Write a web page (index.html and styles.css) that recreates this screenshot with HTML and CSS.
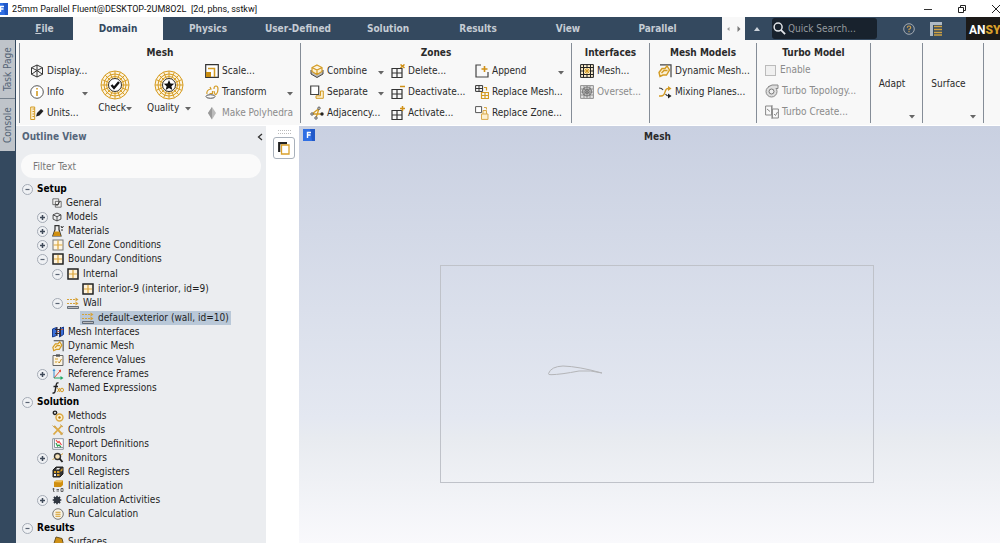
FILE: index.html
```html
<!DOCTYPE html>
<html lang="en">
<head>
<meta charset="utf-8">
<title>25mm Parallel Fluent</title>
<link rel="stylesheet" href="styles.css">
</head>
<body>
<svg class="defs" aria-hidden="true">
  <symbol id="app" viewBox="0 0 12 12"><rect width="12" height="12" fill="#2f6fe4"/><path d="M7 0h5v12H9z" fill="#2159c9"/><path d="M4.500 9V3.500h3.500M4.500 6h3" stroke="#fff" stroke-width="1.400" fill="none"/></symbol>
  <symbol id="plus" viewBox="0 0 11 11"><circle cx="5.500" cy="5.500" r="5" fill="#eff1f4" stroke="#a3aab4"/><path d="M3 5.500h5M5.500 3v5" stroke="#3f4a59" stroke-width="1.500"/></symbol>
  <symbol id="minus" viewBox="0 0 11 11"><circle cx="5.500" cy="5.500" r="5" fill="#eff1f4" stroke="#a3aab4"/><path d="M3.500 5.500h4" stroke="#596373" stroke-width="1.200"/></symbol>
  <symbol id="cube" viewBox="0 0 14 14"><path d="M7 1l5.500 2.700v6.600L7 13l-5.500-2.700V3.700zM1.500 3.700L7 6.500l5.500-2.800M7 6.500V13M7 1v5.500M1.500 10.300L7 6.500l5.500 3.800" fill="none" stroke="#333"/></symbol>
  <symbol id="zone" viewBox="0 0 12 12"><rect x="1" y="1" width="10" height="10" fill="#fff6e4" stroke="#777"/><path d="M1.500 6h9M6 1.500v9" stroke="#dba53a" stroke-width="1.200"/></symbol>
  <symbol id="bound" viewBox="0 0 12 12"><rect x="1" y="1" width="10" height="10" fill="#fff3db" stroke="#222" stroke-width="1.500"/><path d="M2 6h8M6 2v8" stroke="#dba53a" stroke-width="1.200"/></symbol>
  <symbol id="wall" viewBox="0 0 12 12"><path d="M0 2.500h9M0 6.500h9" stroke="#d6a238" stroke-dasharray="2 1"/><path d="M8.500 .5l3 2-3 2zM8.500 4.500l3 2-3 2z" fill="#d6a238"/><path d="M.5 9.500h11v2H.5z" fill="#bbb" stroke="#4b5562" stroke-width=".8"/></symbol>
  <symbol id="dyn" viewBox="0 0 14 14"><path d="M2 .8h11v12.400" fill="none" stroke="#444" stroke-width="1.200"/><path d="M1 8.500l3-4h3l2-2.500 2.500 4-3 5H5l-3 1.500zM3.500 9l2.500-2.500h3.500" fill="#fbf0d5" stroke="#d39b24" stroke-width="1.400"/></symbol>
  <symbol id="grid" viewBox="0 0 14 14"><path d="M1 4.500h10v9H1zM1 9h10M6 4.500v9" fill="none" stroke="#333" stroke-width="1.200"/></symbol>
  <symbol id="disc" viewBox="0 0 30 30"><circle cx="15" cy="15" r="14" fill="#fdf4df"/><g fill="none" stroke="#d69d24"><circle cx="15" cy="15" r="14"/><circle cx="15" cy="15" r="11"/><circle cx="15" cy="15" r="8.500"/><path d="M15 1v28M1 15h28M5.100 5.100l19.800 19.800M24.900 5.100L5.100 24.900M9.600 2.100l10.800 25.800M20.400 2.100L9.600 27.900M2.100 9.600l25.800 10.800M2.100 20.400L27.900 9.600"/></g><circle cx="15" cy="15" r="6.500" fill="#fff" stroke="#333"/></symbol>
  <symbol id="down" viewBox="0 0 6 4"><path d="M0 0h6L3 3.500z" fill="#666"/></symbol>
</svg>

<div class="app">
  <header class="titlebar">
    <svg class="logo"><use href="#app"/></svg>
    <h1>25mm Parallel Fluent@DESKTOP-2UM8O2L&nbsp; [2d, pbns, sstkw]</h1>
    <div class="wincontrols">
      <button aria-label="Minimize"><svg viewBox="0 0 10 10"><path d="M1 5.500h8" stroke="#333"/></svg></button>
      <button aria-label="Restore"><svg viewBox="0 0 10 10"><path d="M1.500 3.500h5v5h-5zM3.500 3.500v-2h5v5h-2" fill="none" stroke="#222"/></svg></button>
      <button aria-label="Close"><svg viewBox="0 0 10 10"><path d="M1 1l8 8M9 1L1 9" stroke="#222"/></svg></button>
    </div>
  </header>

  <nav class="tabs">
    <button class="tab file"><u>F</u>ile</button>
    <button class="tab active">Domain</button>
    <button class="tab">Physics</button>
    <button class="tab">User-Defined</button>
    <button class="tab">Solution</button>
    <button class="tab">Results</button>
    <button class="tab">View</button>
    <button class="tab last">Parallel</button>
    <div class="scroller">
      <button aria-label="Scroll left"><svg viewBox="0 0 4 6"><path d="M3.500 1v4L1 3z" fill="#999"/></svg></button>
      <button aria-label="Scroll right"><svg viewBox="0 0 4 6"><path d="M.5 0v6L3.500 3z" fill="#777"/></svg></button>
    </div>
    <button class="collapse" aria-label="Collapse ribbon"><svg viewBox="0 0 6 4"><path d="M0 4h6L3 0z" fill="#ccd3db"/></svg></button>
    <label class="search">
      <svg viewBox="0 0 14 14"><circle cx="5.500" cy="5.500" r="4.300" fill="none" stroke="#e2e5e9" stroke-width="1.600"/><path d="M8.500 8.500l4.500 4.500" stroke="#e2e5e9" stroke-width="2"/></svg>
      <input type="text" placeholder="Quick Search..." aria-label="Quick Search">
    </label>
    <div class="navicons">
      <button aria-label="Help"><svg class="help" viewBox="0 0 12 12"><circle cx="6" cy="6" r="5.300" fill="none" stroke="#a5acb4"/><path d="M4.300 4.700q0-1.700 1.700-1.700t1.700 1.500T6 6.300v1M6 8v1.200" fill="none" stroke="#d0a04a" stroke-width="1.100"/></svg></button>
      <button aria-label="Layout"><svg class="lay" viewBox="0 0 12 14"><path d="M0 0h12v3H0zM0 3h3v11H0z" fill="#aeb9c4"/><path d="M4 4.500h8M4 7.500h8M4 10.500h8M4 13h8" stroke="#d0a241" stroke-width="1.500"/></svg></button>
    </div>
    <div class="brand">AN<b>SY</b></div>
  </nav>

  <div class="body">
    <aside class="rail">
      <button>Task Page</button>
      <button class="console">Console</button>
    </aside>

    <div class="content">
      <div class="ribbon">
        <section class="group">
          <h2>Mesh</h2>
          <div class="cols mesh">
            <div class="stack">
              <button><svg><use href="#cube"/></svg>Display...</button>
              <button><svg viewBox="0 0 14 14"><circle cx="7" cy="7" r="6.300" fill="#fff" stroke="#555"/><path d="M7 6v5M7 3v1.600" stroke="#d39b24" stroke-width="1.600"/></svg>Info<svg class="dd"><use href="#down"/></svg></button>
              <button><svg viewBox="0 0 14 14"><path d="M.7 1h4v12.500h-4zM2.500 3h2M2.500 5.500h2M2.500 8h2M2.500 10.500h2" fill="#fdf0d0" stroke="#d39b24"/><path d="M6 10.500l1-3.500 4-4 2.500 2-4 4.500z" fill="#222"/></svg>Units...</button>
            </div>
            <button class="big"><svg viewBox="0 0 30 30"><use href="#disc"/><path d="M11.500 15l2.500 3 5-6" fill="none" stroke="#111" stroke-width="2.400"/></svg><span>Check<svg class="dd"><use href="#down"/></svg></span></button>
            <button class="big"><svg viewBox="0 0 30 30"><use href="#disc"/><path d="M15 10l1.500 3.500 3.700.3-2.800 2.400.9 3.800-3.300-2-3.300 2 .9-3.800-2.800-2.400 3.700-.3z" fill="#111"/></svg><span>Quality&nbsp; <svg class="dd"><use href="#down"/></svg></span></button>
            <div class="stack">
              <button><svg viewBox="0 0 14 14"><path d="M.7 .7h12.600v12.600H.7z" fill="#fff" stroke="#333" stroke-width="1.200"/><path d="M1 8h5v5H1z" fill="#c98d10"/><path d="M3 4.500h6.500V13" fill="none" stroke="#d39b24" stroke-width="1.500"/></svg>Scale...</button>
              <button><svg viewBox="0 0 14 14"><ellipse cx="5.500" cy="11.500" rx="4.500" ry="1.800" fill="none" stroke="#555"/><path d="M2 9q-1-4 4-5L5 2M4.500 8.500h3V6M9 4q0-3 2-3t2 3-1.500 5-2.500-3" fill="none" stroke="#d39b24" stroke-width="1.200"/></svg>Transform<svg class="dd"><use href="#down"/></svg></button>
              <button disabled><svg viewBox="0 0 14 14"><path d="M7 1l4 6-4 6.500L3 7z" fill="#bbb"/><path d="M7 1v12.500L3 7z" fill="#999"/></svg>Make Polyhedra</button>
            </div>
          </div>
        </section>

        <section class="group">
          <h2>Zones</h2>
          <div class="cols zones">
            <div class="stack">
              <button><svg viewBox="0 0 14 14"><path d="M1 6v4l6 3.500L13 10V6" fill="#bbb" stroke="#444"/><path d="M7 1l5 2.500v4L7 10.500l-5-3v-4zM2 3.500L7 6l5-2.500M7 6v4" fill="#fdf0d0" stroke="#d39b24" stroke-width="1.200"/></svg>Combine<svg class="dd"><use href="#down"/></svg></button>
              <button><svg viewBox="0 0 14 14"><path d="M.7 1h8v8.500h-8z" fill="#fff" stroke="#444" stroke-width="1.200"/><path d="M10.500 6h2.800v7.300H6v-2.500h4.500z" fill="#fdf0d0" stroke="#d39b24"/></svg>Separate<svg class="dd"><use href="#down"/></svg></button>
              <button><svg viewBox="0 0 14 14"><path d="M2 8l7-5.500M2 8h10M9 2.500L6 12" fill="none" stroke="#d39b24" stroke-width="1.300"/><g fill="#fff" stroke="#555"><circle cx="2" cy="8" r="1.200"/><circle cx="9" cy="2.200" r="1.200"/><circle cx="6" cy="12" r="1.200"/></g><circle cx="12" cy="8" r="1.700" fill="#222"/></svg>Adjacency...</button>
            </div>
            <div class="stack">
              <button><svg viewBox="0 0 14 14"><use href="#grid"/><path d="M9.500 .5l4 3.500m0-3.500L9.500 4" stroke="#d09016" stroke-width="1.500"/></svg>Delete...</button>
              <button><svg viewBox="0 0 14 14"><use href="#grid"/><path d="M9 1.500h5" stroke="#d09016" stroke-width="1.500"/></svg>Deactivate...</button>
              <button><svg viewBox="0 0 14 14"><use href="#grid"/><path d="M9 2.500h5M11.500 0v5" stroke="#d09016" stroke-width="1.500"/></svg>Activate...</button>
            </div>
            <div class="stack">
              <button><svg viewBox="0 0 14 14"><path d="M6 1H1v12h12V8" fill="none" stroke="#444" stroke-width="1.200"/><path d="M6.500 5h6M9.500 2v6" stroke="#d09016" stroke-width="1.600"/></svg>Append<svg class="dd"><use href="#down"/></svg></button>
              <button><svg viewBox="0 0 14 14"><path d="M.6 .6h7v5.800h-7zM.6 3.500h7M4 .6v6" fill="none" stroke="#333"/><path d="M6.500 7.500h7v6h-7zM6.500 10.500h7M10 7.500v6M9 2.500h2.500v3" fill="none" stroke="#d39b24" stroke-width="1.200"/></svg>Replace Mesh...</button>
              <button><svg viewBox="0 0 14 14"><path d="M.6 .6h6v6h-6z" fill="#fff" stroke="#555"/><path d="M6.500 8h6.500v5.400H6.500zM8 8V4.500h3.500V8M9 1.500h2.500v2" fill="#fdf0d0" stroke="#d9a94a"/></svg>Replace Zone...</button>
            </div>
          </div>
        </section>

        <section class="group">
          <h2>Interfaces</h2>
          <div class="stack inset">
            <button><svg viewBox="0 0 14 14"><path d="M.5 .5h13v13H.5z" fill="#fdf0d0"/><path d="M4.500 4.500l5 5M9.500 4.500l-5 5M4 7h6M7 4v6" stroke="#d39b24"/><path d="M.6 .6h12.800v12.800H.6zM3.500 .5v13M10.500 .5v13M.5 3.500h13M.5 10.500h13M.5 7h3M10.500 7h3M7 .5v3M7 10.500v3" fill="none" stroke="#222"/></svg>Mesh...</button>
            <button disabled><svg viewBox="0 0 14 14"><path d="M.6 .6h12.800v12.800H.6zM4 1v12M10 1v12M1 4h12M1 10h12M1 7h12M7 1v12" fill="#e4e4e4" stroke="#909090"/><g fill="none" stroke="#707070"><circle cx="7" cy="6.500" r="4.500"/><circle cx="7" cy="6.500" r="2"/><path d="M4 3.500l6 6M10 3.500l-6 6"/></g></svg>Overset...</button>
          </div>
        </section>

        <section class="group">
          <h2>Mesh Models</h2>
          <div class="stack inset">
            <button><svg><use href="#dyn"/></svg>Dynamic Mesh...</button>
            <button><svg viewBox="0 0 14 14"><path d="M1 11h2q3 0 4-4t4-3.500" fill="none" stroke="#d39b24" stroke-width="1.300"/><path d="M1 3q3 0 4 2M7.500 9q1 2 3.500 2" fill="none" stroke="#444" stroke-width="1.200"/><path d="M10 1l3.500 2.500L10 6z" fill="#d39b24"/><path d="M10 8.500l3.500 2.500-3.500 2.500z" fill="#222"/></svg>Mixing Planes...</button>
          </div>
        </section>

        <section class="group">
          <h2>Turbo Model</h2>
          <div class="stack turbo">
            <label><input type="checkbox" disabled>Enable</label>
            <button disabled><svg viewBox="0 0 14 14"><circle cx="6.500" cy="7.500" r="5.500" fill="#ddd" stroke="#888"/><circle cx="6.500" cy="7.500" r="2.500" fill="#eee" stroke="#777"/><path d="M3 3l4-2h6v3.500h-2" fill="#ddd" stroke="#888"/></svg>Turbo Topology...</button>
            <button disabled><svg viewBox="0 0 14 14"><path d="M.6 1h6v9h-6zM7.400 4h6v9h-6zM7 0v14M2 4l3 2.500M9 9l1.500 1.500L12.500 7" fill="none" stroke="#888"/></svg>Turbo Create...</button>
          </div>
        </section>

        <section class="group solo"><button>Adapt</button><svg class="dd"><use href="#down"/></svg></section>
        <section class="group solo"><button>Surface</button><svg class="dd"><use href="#down"/></svg></section>
        <div class="group"></div>
      </div>

      <div class="work">
        <section class="outline">
          <div class="outlinehead"><h2>Outline View</h2><button aria-label="Hide panel"><svg viewBox="0 0 6 8"><path d="M5 1L1.500 4 5 7" fill="none" stroke="#333" stroke-width="1.300"/></svg></button></div>
          <input class="filter" type="text" placeholder="Filter Text" aria-label="Filter Text">
          <ul class="tree">
            <li><div class="row top"><svg class="tg"><use href="#minus"/></svg>Setup</div>
              <ul>
                <li><div class="row leaf"><svg class="sm" viewBox="0 0 12 12"><path d="M1 1h7v7H1zM4 4h7v7H4z" fill="#f5f5f5" stroke="#555"/><path d="M4.500 7l1.500 2 3.500-5" fill="none" stroke="#333" stroke-width="1.200"/></svg>General</div></li>
                <li><div class="row"><svg class="tg"><use href="#plus"/></svg><svg class="sm" viewBox="0 0 14 14"><path d="M7 1.500l5.500 2.500v6L7 12.500 1.500 10V4zM1.500 4L7 6.500 12.500 4M7 6.500v6" fill="none" stroke="#333" stroke-width="1.200"/></svg>Models</div></li>
                <li><div class="row"><svg class="tg"><use href="#plus"/></svg><svg viewBox="0 0 12 12"><path d="M3 .7h4v4l2 6.300H.8L3 4.700z" fill="#eee" stroke="#333" stroke-width="1.200"/><path d="M2.400 6.500h5l1.400 4.500H1z" fill="#d08f10"/><path d="M9 1l1 2 1.500-2M9 5h2" stroke="#333" fill="none"/></svg>Materials</div></li>
                <li><div class="row"><svg class="tg"><use href="#plus"/></svg><svg><use href="#zone"/></svg>Cell Zone Conditions</div></li>
                <li><div class="row"><svg class="tg"><use href="#minus"/></svg><svg><use href="#bound"/></svg>Boundary Conditions</div>
                  <ul>
                    <li><div class="row"><svg class="tg"><use href="#minus"/></svg><svg><use href="#bound"/></svg>Internal</div>
                      <ul><li><div class="row leaf"><svg><use href="#bound"/></svg>interior-9 (interior, id=9)</div></li></ul></li>
                    <li><div class="row"><svg class="tg"><use href="#minus"/></svg><svg><use href="#wall"/></svg>Wall</div>
                      <ul><li><div class="row leaf"><span class="selected"><svg><use href="#wall"/></svg>default-exterior (wall, id=10)</span></div></li></ul></li>
                  </ul></li>
                <li><div class="row leaf"><svg viewBox="0 0 12 12"><path d="M.5 3l4-1.500v8L.5 11zM7.500 3l4-2v7.500l-4 2.500z" fill="#3a6fd8" stroke="#173a8c"/><path d="M3 3.500h6M3 7.500h6M5 1v9M8.500 1v9" stroke="#332a35"/><path d="M5.500 5.500h2M9 3.500h2" stroke="#c0604c"/></svg>Mesh Interfaces</div></li>
                <li><div class="row leaf"><svg><use href="#dyn"/></svg>Dynamic Mesh</div></li>
                <li><div class="row leaf"><svg viewBox="0 0 12 12"><path d="M1 1.500h10v10H1z" fill="#fbf4e4" stroke="#666"/><path d="M4 .3h4v2.400H4z" fill="#555"/><path d="M3 5h3M3 8h2" stroke="#d39b24" stroke-width="1.200"/><path d="M6 7.500l1.300 1.500L9.500 5" fill="none" stroke="#c08c20"/></svg>Reference Values</div></li>
                <li><div class="row"><svg class="tg"><use href="#plus"/></svg><svg viewBox="0 0 12 12"><path d="M2 10V2" stroke="#3b8ccc"/><path d="M.5 3L2 .5 3.500 3z" fill="#3b8ccc"/><path d="M2 10l6-7" stroke="#e04b35"/><path d="M6.500 2.500L9 1.500v3z" fill="#e04b35"/><path d="M2 10h8" stroke="#21a866"/><path d="M8.500 8l3 2-3 2z" fill="#21a866"/></svg>Reference Frames</div></li>
                <li><div class="row leaf"><svg viewBox="0 0 12 12"><path d="M6.500 1.200Q4.700 0 4.200 3L3 9.500q-.5 2-2.500 1.300M1.500 4.500H6" fill="none" stroke="#222" stroke-width="1.400"/><path d="M5.500 6l2.500 4M8 6l-2.500 4" stroke="#d39b24"/><ellipse cx="10" cy="8" rx="1.500" ry="1.800" fill="none" stroke="#d39b24"/></svg>Named Expressions</div></li>
              </ul></li>
            <li><div class="row top"><svg class="tg"><use href="#minus"/></svg>Solution</div>
              <ul>
                <li><div class="row leaf"><svg viewBox="0 0 12 12"><circle cx="3" cy="2.800" r="1.700" fill="none" stroke="#222" stroke-width="1.400"/><circle cx="7.500" cy="7.500" r="3.500" fill="#fdf0d0" stroke="#dba944" stroke-width="1.400"/><circle cx="7.500" cy="7.500" r="1.200" fill="#b97c0a"/></svg>Methods</div></li>
                <li><div class="row leaf"><svg viewBox="0 0 12 12"><path d="M2 2l8.500 8.500M10 1.500L1.500 10.500" stroke="#dba944" stroke-width="1.800"/><path d="M.5 1.500l2 2 1.500-1.500M8 .5l3 2.500M8.500 11l2.500-2.500" fill="none" stroke="#c7a665"/></svg>Controls</div></li>
                <li><div class="row leaf"><svg viewBox="0 0 12 12"><path d="M.7 .7h10.600v10.600H.7z" fill="#fff" stroke="#8b939e"/><path d="M2.500 1v8.500H11" fill="none" stroke="#8b939e"/><path d="M4 2l2 2.500 1-1L9.500 7" fill="none" stroke="#e44" stroke-width="1.200"/><path d="M4 5l1.500 3 1.500-1 2 2" fill="none" stroke="#2a9d4e" stroke-width="1.200"/></svg>Report Definitions</div></li>
                <li><div class="row"><svg class="tg"><use href="#plus"/></svg><svg viewBox="0 0 12 12"><circle cx="5.500" cy="4.500" r="3" fill="#f7e3ba" stroke="#333" stroke-width="1.400"/><path d="M7.500 6.500l3 3.500" stroke="#222" stroke-width="1.900"/><path d="M.5 8l2-2M9 3l2-1.500" stroke="#dba944"/></svg>Monitors</div></li>
                <li><div class="row leaf"><svg viewBox="0 0 12 12"><path d="M1 4l3-3h7v7l-3 3H1z" fill="#333" stroke="#222"/><path d="M2 5h2v2H2zM5 5h2.500v2H5zM5 8h2.500v2H5zM8.500 4l2-2v2.500l-2 1.500z" fill="#d9a02b"/><path d="M2 8h2v2H2zM5 2h3L7 3.500H4z" fill="#eee"/></svg>Cell Registers</div></li>
                <li><div class="row leaf"><svg viewBox="0 0 12 12"><path d="M2 2l2-1.500h7v4.500L9 7H2z" fill="#d08f10"/><path d="M2 2l2-1.500h7L9 2.500z" fill="#eebd57"/><path d="M1.500 8v3.500h1M.5 9h2M4.500 9.500h2.500M4.500 11h2.500M9 8.500h2v3H9z" fill="none" stroke="#555" stroke-width=".9"/></svg>Initialization</div></li>
                <li><div class="row"><svg class="tg"><use href="#plus"/></svg><svg class="sm" viewBox="0 0 12 12"><circle cx="6" cy="6" r="4" fill="#2f3640"/><path d="M6 .8v10.400M.8 6h10.400M2.300 2.300l7.400 7.400M9.700 2.300L2.300 9.700" stroke="#2f3640" stroke-width="2"/></svg>Calculation Activities</div></li>
                <li><div class="row leaf"><svg viewBox="0 0 12 12"><circle cx="6" cy="6" r="5.300" fill="#f7f2e6" stroke="#777"/><path d="M3.500 4.200h5M3.500 6.200h5M3.500 8.200h5" stroke="#d39b24" stroke-width="1.100"/></svg>Run Calculation</div></li>
              </ul></li>
            <li><div class="row top"><svg class="tg"><use href="#minus"/></svg>Results</div>
              <ul><li><div class="row leaf"><svg viewBox="0 0 12 12"><path d="M4 1l6 1.500 1 4-4 5-6-1z" fill="#cf9117" stroke="#6b5220"/></svg>Surfaces</div></li></ul></li>
          </ul>
        </section>

        <div class="toolstrip">
          <div class="grip"></div>
          <button aria-label="Copy view"><svg viewBox="0 0 12 13"><path d="M1.200 10V1.200H9" fill="none" stroke="#222" stroke-width="2.200"/><path d="M3.500 3h7.500v9H3.500z" fill="#fff" stroke="#d9a02b" stroke-width="1.300"/></svg></button>
        </div>

        <main class="viewport">
          <div class="viewhead"><svg class="logo"><use href="#app"/></svg><h2>Mesh</h2></div>
          <svg class="scene" viewBox="0 0 701 399" preserveAspectRatio="none">
            <rect x="141.500" y="121.500" width="433" height="217" fill="none" stroke="#bfc2c9"/>
            <path d="M249.500 229.500Q252 222.500 264 222Q280 222.500 303 229Q292 226 280 227Q262 230.500 252 230.700Q249 230.700 249.500 229.500z" fill="none" stroke="#b4b5b8"/>
          </svg>
        </main>
      </div>
    </div>
  </div>
</div>
</body>
</html>
```
FILE: styles.css
```css
* { box-sizing: border-box; }
body { margin: 0; font-family: "DejaVu Sans Condensed", "Noto Sans", sans-serif; font-size: 10px; line-height: 14px; color: #2a2a2a; background: #fff; }
h1, h2, ul { margin: 0; padding: 0; }
ul { list-style: none; }
button { margin: 0; padding: 0; border: 0; background: none; font: inherit; color: inherit; }
input { font: inherit; }
.defs { display: none; }
svg { flex: none; }
.logo { width: 12px; height: 12px; }
.app { display: flex; flex-direction: column; height: 100vh; overflow: hidden; }

.titlebar { display: flex; align-items: center; flex: none; height: 17px; }
.titlebar .logo { margin-left: -4px; }
.titlebar h1 { flex: 1; margin-left: 4px; font: 9px/14px Roboto, sans-serif; color: #111; white-space: nowrap; }
.wincontrols { display: flex; gap: 24px; margin-right: -1px; }
.wincontrols button { width: 10px; height: 10px; }
.wincontrols svg { display: block; width: 10px; height: 10px; }

.tabs { display: flex; flex: none; height: 23px; background: #34495f; }
.tab { flex: 0 1 90px; font-weight: bold; font-size: 10px; color: #c5ccd4; }
.tab.file { flex-basis: 73px; padding-left: 16px; }
.tab.active { background: #f8f8f8; color: #34495f; }
.tab.last { flex-basis: 109px; padding: 0 20px 0 0; }
.scroller { display: flex; align-items: center; justify-content: center; gap: 7px; width: 23px; background: #f8f8f8; }
.scroller button { line-height: 0; }
.scroller svg { width: 4px; height: 6px; }
.collapse { width: 23px; line-height: 0; }
.collapse svg { width: 6px; height: 4px; }
.search { display: flex; flex: 0 1 105px; align-items: center; gap: 2px; min-width: 0; margin: 1px 0 1px 4px; padding-left: 1px; border-radius: 3px; background: #18222d; }
.search svg { width: 13px; height: 13px; }
.search input { flex: 1; min-width: 0; padding: 0; border: 0; outline: 0; background: none; color: #a0a5aa; }
.search input::placeholder { color: #969b9f; opacity: 1; }
.navicons { display: flex; flex: 1; align-items: center; justify-content: flex-end; gap: 15px; padding-right: 24px; }
.navicons button { line-height: 0; }
.help { width: 12px; height: 12px; }
.lay { width: 12px; height: 14px; }
.brand { width: 34px; padding: 4px 0 0 3px; overflow: hidden; background: #1c1a18; color: #fff; font: bold 12px/18px Roboto, sans-serif; }
.brand b { color: #d9a02b; }

.body { display: flex; flex: 1; min-height: 0; }
.rail { flex: none; width: 16px; background: #34495f; }
.rail button { display: block; width: 15px; height: 59px; background: #bfc4ca; border-top: 1px solid #75808c; color: #566577; writing-mode: vertical-rl; transform: rotate(180deg); text-align: center; }
.rail .console { height: 52px; border-top: 0; }
.content { display: flex; flex: 1; flex-direction: column; min-width: 0; }

.ribbon { display: grid; flex: none; grid-template-columns: 281fr 271fr 78fr 107fr 114fr 52fr 61fr 17fr; height: 86px; padding: 3px 0 5px 3px; background: #f8f8f8; border-bottom: 1px solid #fff; }
.group { min-width: 0; border-left: 1px solid #858d97; white-space: nowrap; }
.group h2 { padding-top: 2px; font-size: 10px; line-height: 15px; text-align: center; }
.stack { display: flex; flex-direction: column; }
.stack button, .stack label { display: flex; align-items: center; gap: 3px; height: 21px; text-align: left; }
.stack button > svg:first-child { width: 14px; height: 14px; }
.stack button:disabled, .stack label { color: #8b8b8b; }
.stack .dd { margin: 5px 7px 0 auto; }
svg.dd { width: 6px; height: 4px; }
.cols { display: grid; }
.cols.mesh { grid-template-columns: 58px 54px 54px 1fr; padding-left: 10px; }
.cols.mesh .stack:first-child .dd { margin-right: 0; }
.cols.mesh .stack:last-child { padding-left: 9px; }
.big { display: flex; flex-direction: column; align-items: center; gap: 1px; padding-top: 10px; }
.big > svg { width: 30px; height: 30px; }
.cols.zones { grid-template-columns: 81px 84px 1fr; padding-left: 9px; }
.inset, .turbo { padding-left: 8px; }
.turbo label { height: 20px; gap: 4px; }
.turbo input { appearance: none; width: 11px; height: 11px; margin: 0; border: 1px solid #bbb; background: #f0f0f0; }
.solo { display: flex; flex-direction: column; align-items: center; padding-top: 34px; }
.solo button { margin-right: 9px; }
.solo .dd { margin: auto 7px 4px auto; }

.work { display: flex; flex: 1; min-height: 0; }
.outline { flex: 0 1 250px; overflow: hidden; background: #ebedf0; color: #1e1e1e; white-space: nowrap; }
.outlinehead { display: flex; align-items: center; justify-content: space-between; padding: 3px 3px 0 6px; }
.outlinehead h2 { font-size: 10px; line-height: 15px; color: #54657a; }
.outlinehead svg { display: block; width: 6px; height: 8px; }
.filter { display: block; width: calc(100% - 10px); height: 24px; margin: 10px 5px 4px; padding: 0 12px; border: 0; border-radius: 12px; background: #fafafa; }
.filter::placeholder { color: #777; opacity: 1; }
.tree { padding-left: 6px; }
.tree ul { padding-left: 15px; }
.tree ul ul { padding-top: 1px; }
.row { display: flex; align-items: center; gap: 4px; height: 14px; }
.row svg { width: 12px; height: 12px; }
.row svg.tg { width: 11px; height: 11px; }
.row svg.sm { width: 10px; height: 10px; }
.row.leaf { padding-left: 15px; }
.row.top { font-weight: bold; color: #000; }
.selected { display: flex; align-items: center; gap: 4px; height: 14px; margin-left: -2px; padding: 0 2px; background: #b9c8d8; }

.toolstrip { flex: none; width: 33px; padding: 4px 5px 0 7px; }
.grip { height: 4px; margin: 0 3px 3px 5px; border-top: 1px dotted #bbb; border-bottom: 1px dotted #bbb; }
.toolstrip button { display: grid; place-items: center; width: 22px; height: 22px; border: 1px solid #a9b1bb; border-radius: 3px; }
.toolstrip svg { width: 12px; height: 13px; }
.viewport { flex: 1; min-width: 0; background: linear-gradient(#c9d0e1, #e4e8f1 70%, #e8ebf0 75%, #f9f9fc); }
.viewhead { display: flex; padding: 3px 0 0 4px; }
.viewhead h2 { flex: 1; font-size: 10px; line-height: 15px; text-align: center; }
.scene { display: block; width: 100%; height: calc(100% - 18px); }
```
